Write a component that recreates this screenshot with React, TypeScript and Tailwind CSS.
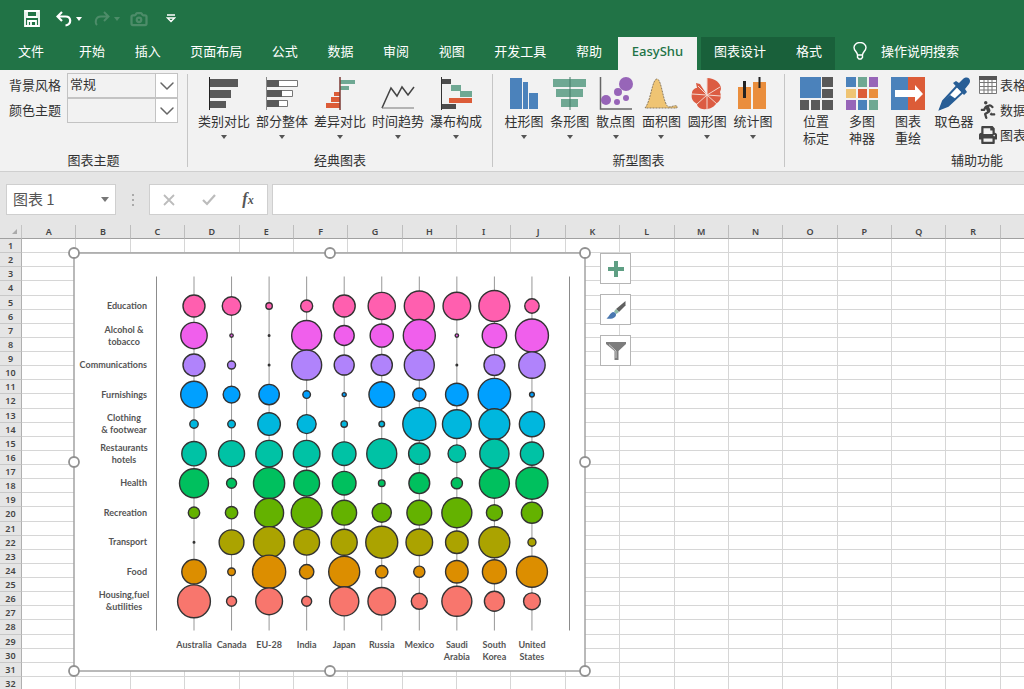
import type { ReactNode } from 'react';
import { Camera, ChevronDown } from 'lucide-react';
import { FaPrint, FaRunning } from 'react-icons/fa';

const tabs = ['开始', '插入', '页面布局', '公式', '数据', '审阅', '视图', '开发工具', '帮助'];
const columns = 'ABCDEFGHIJKLMNOPQR'.split('');
const rows = Array.from({ length: 32 }, (_, i) => i + 1);

const countries = [
  ['Australia'],
  ['Canada'],
  ['EU-28'],
  ['India'],
  ['Japan'],
  ['Russia'],
  ['Mexico'],
  ['Saudi', 'Arabia'],
  ['South', 'Korea'],
  ['United', 'States'],
];

// one radius per country
const series = [
  { label: ['Education'], color: '#ff5faf', values: [11, 9.3, 3.2, 6, 11, 13.6, 15, 13.8, 15.5, 7.2] },
  { label: ['Alcohol &', 'tobacco'], color: '#f05fec', values: [13.2, 1.7, 0.8, 15, 10, 11.6, 16, 1.7, 12.2, 16.5] },
  { label: ['Communications'], color: '#b083fb', values: [11, 4, 0.8, 15, 10, 10.6, 15, 0.8, 10.4, 13.2] },
  { label: ['Furnishings'], color: '#00a0ff', values: [13.3, 8.4, 10.2, 3.8, 2, 12.8, 6.6, 11.3, 16.2, 2.4] },
  { label: ['Clothing', '& footwear'], color: '#00b7de', values: [4.2, 3.8, 11.3, 9.5, 3.2, 2.8, 16.5, 14.4, 15.4, 12.6] },
  { label: ['Restaurants', 'hotels'], color: '#00c2a5', values: [12.2, 13, 13.3, 13.3, 11.8, 15, 10.7, 8.8, 14.6, 11.6] },
  { label: ['Health'], color: '#00c05e', values: [14.5, 5, 15.6, 12.9, 11.8, 3.3, 10.4, 5.6, 15, 16] },
  { label: ['Recreation'], color: '#64b200', values: [5.7, 6.2, 14.5, 15.4, 12.4, 9.6, 12.4, 15, 8, 10.6] },
  { label: ['Transport'], color: '#aba300', values: [0.8, 12.4, 15.6, 12.9, 13, 16, 13.3, 11.3, 15.5, 4] },
  { label: ['Food'], color: '#dc8e00', values: [12.2, 3.8, 16.6, 7.2, 15.5, 6.2, 5.6, 11.3, 12, 15.5] },
  { label: ['Housing,fuel', '&utilities'], color: '#f8766d', values: [16.4, 5, 13.4, 5, 14.6, 13.8, 8, 15, 10, 8.4] },
];

const handles = [
  [0, 0], [256, 0], [511, 0], [0, 209], [511, 209], [0, 418], [256, 418], [511, 418],
];

function Icon({ children }: { children: ReactNode }) {
  return (
    <svg viewBox="0 0 34 34" className="h-[34px] w-[34px] shrink-0">
      {children}
    </svg>
  );
}

const classicCharts = [
  {
    label: '类别对比',
    icon: (
      <Icon>
        <path d="M3 2h28v8H3zM3 13h21v8H3zM3 24h16v7H3z" fill="#595959" />
        <path d="M2.5 0v33" stroke="#222" />
      </Icon>
    ),
  },
  {
    label: '部分整体',
    icon: (
      <Icon>
        <path d="M2.500 3.500h30v6h-30zM2.500 13.500h25v6h-25zM2.500 23.500h20v6h-20z" fill="#fff" stroke="#777" />
        <path d="M2 3h12v7H2zM2 13h15v7H2zM2 23h12v7H2z" fill="#595959" />
        <path d="M1.500 0v33" stroke="#888" />
      </Icon>
    ),
  },
  {
    label: '差异对比',
    icon: (
      <Icon>
        <path d="M17 3h15v4H17zM17 9h9v4h-9z" fill="#6fa893" />
        <path d="M11 15h6v4h-6zM8 20h9v5H8zM3 26h14v5H3z" fill="#dc5c38" />
        <path d="M17 0v33" stroke="#7b3a35" strokeWidth="1.5" />
      </Icon>
    ),
  },
  {
    label: '时间趋势',
    icon: (
      <Icon>
        <path d="M1 31 10 11l6 8 5-9 6 8 6-8" fill="none" stroke="#444" strokeWidth="1.5" />
        <path d="M1 31h32" stroke="#777" />
      </Icon>
    ),
  },
  {
    label: '瀑布构成',
    icon: (
      <Icon>
        <path d="M2 2h10v5H2zM2 27h15v5H2z" fill="#4d4d4d" />
        <path d="M12 8h10v6H12zM21 14h12v6H21z" fill="#6fa893" />
        <path d="M10 21h23v5H10z" fill="#dc5c38" />
        <path d="M2.500 0v33" stroke="#333" />
      </Icon>
    ),
  },
];

const newCharts = [
  {
    label: '柱形图',
    icon: (
      <Icon>
        <path d="M3 1h12v31H3zM16 5h5v27h-5zM22 16h9v16h-9z" fill="#4b82bb" />
      </Icon>
    ),
  },
  {
    label: '条形图',
    icon: (
      <Icon>
        <path d="M0 2h33v8H0zM3 12h27v8H3zM8 22h17v8H8z" fill="#6fa893" />
        <path d="M17 0v33" stroke="#467b68" />
      </Icon>
    ),
  },
  {
    label: '散点图',
    icon: (
      <Icon>
        <path d="M1.500 0v32H33" fill="none" stroke="#666" strokeWidth="1.500" />
        <g fill="#9765b8">
          <circle cx="27" cy="7" r="7" />
          <circle cx="7" cy="23" r="5" />
          <circle cx="19" cy="15" r="4" />
          <circle cx="18" cy="25" r="3" />
          <circle cx="27" cy="21" r="3" />
        </g>
      </Icon>
    ),
  },
  {
    label: '面积图',
    icon: (
      <Icon>
        <path d="M1 31C7 24 8 2 13 2s6 27 12 28c3 0 5-2 8-1v2z" fill="#efc473" stroke="#8b7a60" strokeDasharray="2 1" />
      </Icon>
    ),
  },
  {
    label: '圆形图',
    icon: (
      <Icon>
        <path d="M17 18V1c8 0 14 5 14 11l-1 3c2 6 0 9-4 12-3 4-7 5-10 5-5 1-9-2-9-5-5-3-6-6-5-11 0-3 3-5 5-5L6 6l4 1z" fill="#dc5c42" />
        <path d="M17 18 30 10M17 18l14 1M17 18l10 9M17 18v15M17 18 7 27M17 18 2 17M17 18 8 9M17 18V1" stroke="#f3d8cf" />
      </Icon>
    ),
  },
  {
    label: '统计图',
    icon: (
      <Icon>
        <path d="M2 10h13v22H2zM17 5h13v27H17z" fill="#ea8e3d" />
        <path d="M8.500 4v17" stroke="#222" strokeWidth="3" />
        <path d="M23.500 0v11" stroke="#222" strokeWidth="2" />
      </Icon>
    ),
  },
];

const tools = [
  {
    label: ['位置', '标定'],
    icon: (
      <Icon>
        <path d="M1 0h21v21H1z" fill="#4b82bb" />
        <path d="M23 0h11v10H23zM23 12h11v9H23zM1 23h9v10H1zM12 23h9v10h-9zM23 23h11v10H23z" fill="#595959" />
      </Icon>
    ),
  },
  {
    label: ['多图', '神器'],
    icon: (
      <Icon>
        <path d="M1 0h10v10H1zM13 23h9v10h-9z" fill="#4b82bb" />
        <path d="M13 0h9v10h-9zM24 23h9v10h-9z" fill="#6fa893" />
        <path d="M24 0h9v10h-9zM1 23h10v10H1z" fill="#9765b8" />
        <path d="M1 12h10v9H1z" fill="#efc473" />
        <path d="M13 12h9v9h-9z" fill="#dc5c38" />
        <path d="M24 12h9v9h-9z" fill="#ea8e3d" />
      </Icon>
    ),
  },
  {
    label: ['图表', '重绘'],
    icon: (
      <Icon>
        <path d="M0 0h17v33H0z" fill="#4b82bb" />
        <path d="M17 0h17v33H17z" fill="#dc5c38" />
        <path d="M4 13h20V8l8 9-8 8v-5H4z" fill="#fff" />
      </Icon>
    ),
  },
  {
    label: ['取色器'],
    icon: (
      <Icon>
        <path d="m20 9 6 6L11 29l-8 3 3-8z" fill="#fff" stroke="#285e96" strokeWidth="2" />
        <path d="m13 18 6 4-8 7-9 4 4-9z" fill="#285e96" />
        <path d="m16 6 3-2 3 2 4-4c5-4 9 1 6 5l-4 5 2 3-3 3z" fill="#285e96" />
      </Icon>
    ),
  },
];

function RibbonGroup({ caption, className, children }: { caption: string; className: string; children: ReactNode }) {
  return (
    <section className={`flex shrink-0 flex-col ${className}`}>
      <div className="flex flex-1">{children}</div>
      <h2 className="pb-px text-center leading-5">{caption}</h2>
    </section>
  );
}

function Caret({ className }: { className: string }) {
  return (
    <svg viewBox="0 0 6 4" className={`h-1 w-1.5 fill-current ${className}`}>
      <path d="M0 0h6L3 4z" />
    </svg>
  );
}

function ThemeSelect({ id, label, value }: { id: string; label: string; value: string }) {
  return (
    <div className="flex h-[25px] items-center">
      <label htmlFor={id} className="w-[58px] whitespace-nowrap pb-0.5">
        {label}
      </label>
      <div className="relative flex-1">
        <select id={id} className="h-[25px] w-full appearance-none border border-[#c3c3c3] px-0.5 pb-1 outline-none">
          <option>{value}</option>
        </select>
        <span className="pointer-events-none absolute inset-y-px right-px flex w-[22px] items-center justify-center border-l border-[#c3c3c3] bg-white">
          <ChevronDown size={24} strokeWidth={1.5} color="#666" className="shrink-0" />
        </span>
      </div>
    </div>
  );
}

function ChartButtons({ items, wide }: { items: { label: string; icon: ReactNode }[]; wide?: boolean }) {
  return (
    <>
      {items.map((item) => (
        <button
          key={item.label}
          type="button"
          className={`flex flex-col items-center whitespace-nowrap pt-[7px] ${wide ? 'w-[58px]' : 'w-[46px]'}`}
        >
          {item.icon}
          <span className="leading-5">{item.label}</span>
          <Caret className="mt-1 text-[#555]" />
        </button>
      ))}
    </>
  );
}

function BubbleChart() {
  const x = (i: number) => 120 + i * 37.55;
  const y = (i: number) => 53 + i * 29.53;

  return (
    <svg
      viewBox="0 0 511 418"
      className="h-[418px] w-[511px] overflow-visible font-['Lato','Noto_Sans',sans-serif]"
    >
      <rect width="511" height="418" fill="#fff" stroke="#a3a3a3" strokeWidth="1.5" />
      <path d="M82.500 23.500v354M495.500 23.500v354" stroke="#8c8c8c" />
      {countries.map((_, i) => (
        <path key={i} d={`M${x(i)} 23.500v354`} stroke="#979797" />
      ))}
      {series.map((s, row) =>
        s.values.map((r, i) => (
          <circle key={`${row}-${i}`} cx={x(i)} cy={y(row)} r={r} fill={s.color} stroke="#333" strokeWidth="1.4" />
        )),
      )}
      <g fontSize="9" fontWeight="700" fill="#555">
        {series.map((s, row) =>
          s.label.length === 1 ? (
            <text key={row} x="73" y={y(row) + 3} textAnchor="end">
              {s.label[0]}
            </text>
          ) : (
            <text key={row} textAnchor="middle">
              <tspan x="50" y={y(row) - 3}>{s.label[0]}</tspan>
              <tspan x="50" y={y(row) + 9}>{s.label[1]}</tspan>
            </text>
          ),
        )}
        {countries.map((lines, i) => (
          <text key={i} textAnchor="middle">
            {lines.map((line, n) => (
              <tspan key={line} x={x(i)} y={395 + n * 12}>
                {line}
              </tspan>
            ))}
          </text>
        ))}
      </g>
      {handles.map(([cx, cy]) => (
        <circle key={`${cx}-${cy}`} cx={cx} cy={cy} r="5" fill="#fff" stroke="#919191" strokeWidth="1.8" />
      ))}
    </svg>
  );
}

function SideButton({ label, children }: { label: string; children: ReactNode }) {
  return (
    <button
      type="button"
      aria-label={label}
      className="flex h-[31px] w-[31px] items-center justify-center border border-[#b5b5b5] bg-white"
    >
      {children}
    </button>
  );
}

export default function App() {
  return (
    <div className="flex h-screen flex-col overflow-hidden bg-white font-['Noto_Sans_CJK_SC',sans-serif] text-[13px] text-[#333]">
      <header className="bg-[#217346] text-white">
        <div className="flex h-[37px] items-center pl-6">
          <button type="button" aria-label="保存">
            <svg viewBox="0 0 16 17" className="h-[17px] w-4" fill="none" stroke="currentColor" strokeWidth="1.800">
              <path d="M1 1h14v15H1zM3 1v6h10V1M4 16v-5h8v5M7 12v4" />
            </svg>
          </button>
          <button type="button" aria-label="撤消" className="ml-4 flex items-center">
            <svg viewBox="0 0 16 16" className="h-4 w-4" fill="none" stroke="currentColor" strokeWidth="2.200">
              <path d="M6 1 1.500 5.500 6 10M2 5.500h7.500c6 0 6.500 8 0 9" />
            </svg>
            <Caret className="ml-1" />
          </button>
          <button type="button" aria-label="恢复" className="ml-3 flex items-center text-[#4d8c69]">
            <svg viewBox="0 0 16 16" className="h-4 w-4" fill="none" stroke="currentColor" strokeWidth="2">
              <path d="m10 1 4.500 4.500L10 10M14 5.500H7C1 5.500 1 12 3 14" />
            </svg>
            <Caret className="ml-1" />
          </button>
          <button type="button" aria-label="照相机" className="ml-2.5 text-[#4d8c69]">
            <Camera size={18} strokeWidth={3} />
          </button>
          <button type="button" aria-label="自定义快速访问工具栏" className="ml-[18px]">
            <svg viewBox="0 0 10 10" className="h-2.5 w-2.5" fill="none" stroke="currentColor" strokeWidth="1.300">
              <path d="M1 1h8M1.500 4 5 7.500 8.500 4z" />
            </svg>
          </button>
        </div>
        <nav className="flex h-[33px] items-stretch whitespace-nowrap">
          <button type="button" className="ml-[18px] pb-1.5">
            文件
          </button>
          <div className="ml-[35px] flex w-[523px] shrink-0 justify-between">
            {tabs.map((tab) => (
              <button key={tab} type="button" className="pb-1.5">
                {tab}
              </button>
            ))}
          </div>
          <button
            type="button"
            className="ml-4 w-[79px] shrink-0 bg-[#f2f2f2] pb-1 font-['Noto_Sans',sans-serif] font-medium text-[#217346]"
          >
            EasyShu
          </button>
          <div className="ml-1 flex shrink-0 gap-[30px] bg-[#19603a] px-[13px]">
            <button type="button" className="pb-1.5">
              图表设计
            </button>
            <button type="button" className="pb-1.5">
              格式
            </button>
          </div>
          <button type="button" className="ml-[18px] flex shrink-0 items-center gap-3.5 pb-1.5">
            <svg viewBox="0 0 14 18" className="h-[18px] w-3.5" fill="none" stroke="currentColor" strokeWidth="1.400">
              <path d="M4.500 13c0-3-3.500-4-3.500-7.500a6 5 0 0 1 12 0C13 9 9.500 10 9.500 13zM4.500 13v2.500L6 17h2l1.500-1.500V13" />
            </svg>
            操作说明搜索
          </button>
        </nav>
      </header>

      <div className="flex h-[102px] shrink-0 border-b border-[#cfcfcf] bg-[#f2f2f2]">
        <RibbonGroup caption="图表主题" className="w-[187px] px-[9px]">
          <div className="w-full pt-[3px]">
            <ThemeSelect id="background" label="背景风格" value="常规" />
            <ThemeSelect id="color" label="颜色主题" value="" />
          </div>
        </RibbonGroup>
        <div className="my-1 w-px shrink-0 bg-[#c6c6c6]" />
        <RibbonGroup caption="经典图表" className="w-[304px] px-[7px]">
          <ChartButtons items={classicCharts} wide />
        </RibbonGroup>
        <div className="my-1 w-px shrink-0 bg-[#c6c6c6]" />
        <RibbonGroup caption="新型图表" className="w-[291px] px-2">
          <ChartButtons items={newCharts} />
        </RibbonGroup>
        <div className="my-1 w-px shrink-0 bg-[#c6c6c6]" />
        <RibbonGroup caption="辅助功能" className="w-[376px] pl-2">
          {tools.map((tool) => (
            <button
              key={tool.label[0]}
              type="button"
              className="flex w-[46px] flex-col items-center whitespace-nowrap pt-[7px]"
            >
              {tool.icon}
              <span className="flex flex-col pt-px leading-[17px]">
                {tool.label.map((line) => (
                  <span key={line}>{line}</span>
                ))}
              </span>
            </button>
          ))}
          <div className="flex flex-col whitespace-nowrap pl-0.5 pt-0.5">
            <button type="button" className="flex h-[25px] items-center gap-[3px]">
              <svg viewBox="0 0 18 18" className="h-[18px] w-[18px]" fill="#fff" stroke="#777">
                <path d="M.5.500h17v17H.5zM.5 6.500h17M.5 10.500h17M.5 14h17M5 4v13M9 4v13M13 4v13" />
                <path d="M0 0h18v4H0z" fill="#555" stroke="none" />
              </svg>
              表格
            </button>
            <button type="button" className="flex h-[25px] items-center gap-[3px]">
              <FaRunning size={18} color="#444" className="-scale-x-100" />
              数据
            </button>
            <button type="button" className="flex h-[25px] items-center gap-[3px]">
              <FaPrint size={18} color="#444" />
              图表
            </button>
          </div>
        </RibbonGroup>
      </div>

      <div className="flex h-[53px] shrink-0 items-start bg-[#e5e5e5] pl-1.5 pt-3">
        <button
          type="button"
          className="flex h-[31px] w-[110px] items-center justify-between border border-[#cfcfcf] bg-white px-1.5 pb-px text-[15px] text-[#555]"
        >
          图表 1
          <svg viewBox="0 0 8 5" className="h-[5px] w-2 fill-[#777]">
            <path d="M0 0h8L4 5z" />
          </svg>
        </button>
        <span className="flex h-[31px] w-[33px] flex-col items-center justify-center gap-[3px]">
          <i className="h-0.5 w-0.5 bg-[#aaa]" />
          <i className="h-0.5 w-0.5 bg-[#aaa]" />
          <i className="h-0.5 w-0.5 bg-[#aaa]" />
        </span>
        <div className="flex h-[31px] w-[119px] items-center justify-around border border-[#cfcfcf] bg-white">
          <button type="button" aria-label="取消">
            <svg viewBox="0 0 12 12" className="h-3 w-3" stroke="#bcbcbc" strokeWidth="1.800">
              <path d="m1 1 10 10M11 1 1 11" />
            </svg>
          </button>
          <button type="button" aria-label="输入">
            <svg viewBox="0 0 14 12" className="h-3 w-3.5" fill="none" stroke="#bcbcbc" strokeWidth="2.200">
              <path d="m1 6 4 4 8-9" />
            </svg>
          </button>
          <button type="button" className="font-['Liberation_Serif',serif] text-[16px] leading-5 font-bold italic text-[#555]">
            f<span className="text-[12px]">x</span>
          </button>
        </div>
        <input
          aria-label="编辑栏"
          className="ml-1 h-[31px] min-w-0 flex-1 border border-r-0 border-[#cfcfcf] bg-white px-2 outline-none"
        />
      </div>

      <main className="relative min-h-0 flex-1">
        <table className="h-[466px] w-full table-fixed border-separate border-spacing-0 font-['Noto_Sans',sans-serif] text-[9px] leading-3 text-[#444]">
          <colgroup>
            <col className="w-[22px]" />
            {columns.map((c) => (
              <col key={c} />
            ))}
            <col className="w-[23px]" />
          </colgroup>
          <thead>
            <tr className="bg-[#e5e5e5]">
              <th aria-label="全选" className="border-r border-b border-r-[#c4c4c4] border-b-[#a0a0a0] p-0">
                <svg viewBox="0 0 5 5" className="ml-auto mr-1 h-[5px] w-[5px] fill-[#aaa]">
                  <path d="M5 0v5H0z" />
                </svg>
              </th>
              {columns.map((c) => (
                <th key={c} className="border-r border-b border-r-[#bdbdbd] border-b-[#a0a0a0] p-0 pt-px font-semibold">
                  {c}
                </th>
              ))}
              <td className="border-b border-[#a0a0a0] p-0" />
            </tr>
          </thead>
          <tbody>
            {rows.map((r) => (
              <tr key={r}>
                <th className="border-r border-b border-r-[#b0b0b0] border-b-[#c8c8c8] bg-[#e5e5e5] p-0 pt-px font-semibold">
                  {r}
                </th>
                {columns.map((c) => (
                  <td key={c} className="border-r border-b border-[#d6d6d6] p-0" />
                ))}
                <td className="border-b border-[#d6d6d6] p-0" />
              </tr>
            ))}
          </tbody>
        </table>

        {/* floating chart object and its side buttons */}
        <div className="absolute top-7 left-[74px] flex items-start gap-[15px]">
          <BubbleChart />
          <div className="flex flex-col gap-2.5">
            <SideButton label="图表元素">
              <svg viewBox="0 0 16 16" className="h-4 w-4 fill-[#5f9f84]">
                <path d="M6 0h4v6h6v4h-6v6H6v-6H0V6h6z" />
              </svg>
            </SideButton>
            <SideButton label="图表样式">
              <svg viewBox="0 0 20 20" className="h-5 w-5">
                <path d="M19.500 1v4.500L13 12l-3-3z" fill="#606060" />
                <path d="m10 9 3 3-2.500 2-2.500-2.500z" fill="#8db9a5" />
                <path d="M7 12c3 0 4 3 2 5-2 2-6 2-8.500 1.500C3 17 4 13 7 12z" fill="#4a78b0" />
              </svg>
            </SideButton>
            <SideButton label="图表筛选器">
              <svg viewBox="0 0 20 18" className="h-[18px] w-5">
                <path d="M0 0h20v2l-7.500 7v9h-4V9L0 2z" fill="#7c7c7c" />
                <path d="M3 2.500 10 9v7" fill="none" stroke="#c8c8c8" />
              </svg>
            </SideButton>
          </div>
        </div>
      </main>
    </div>
  );
}
